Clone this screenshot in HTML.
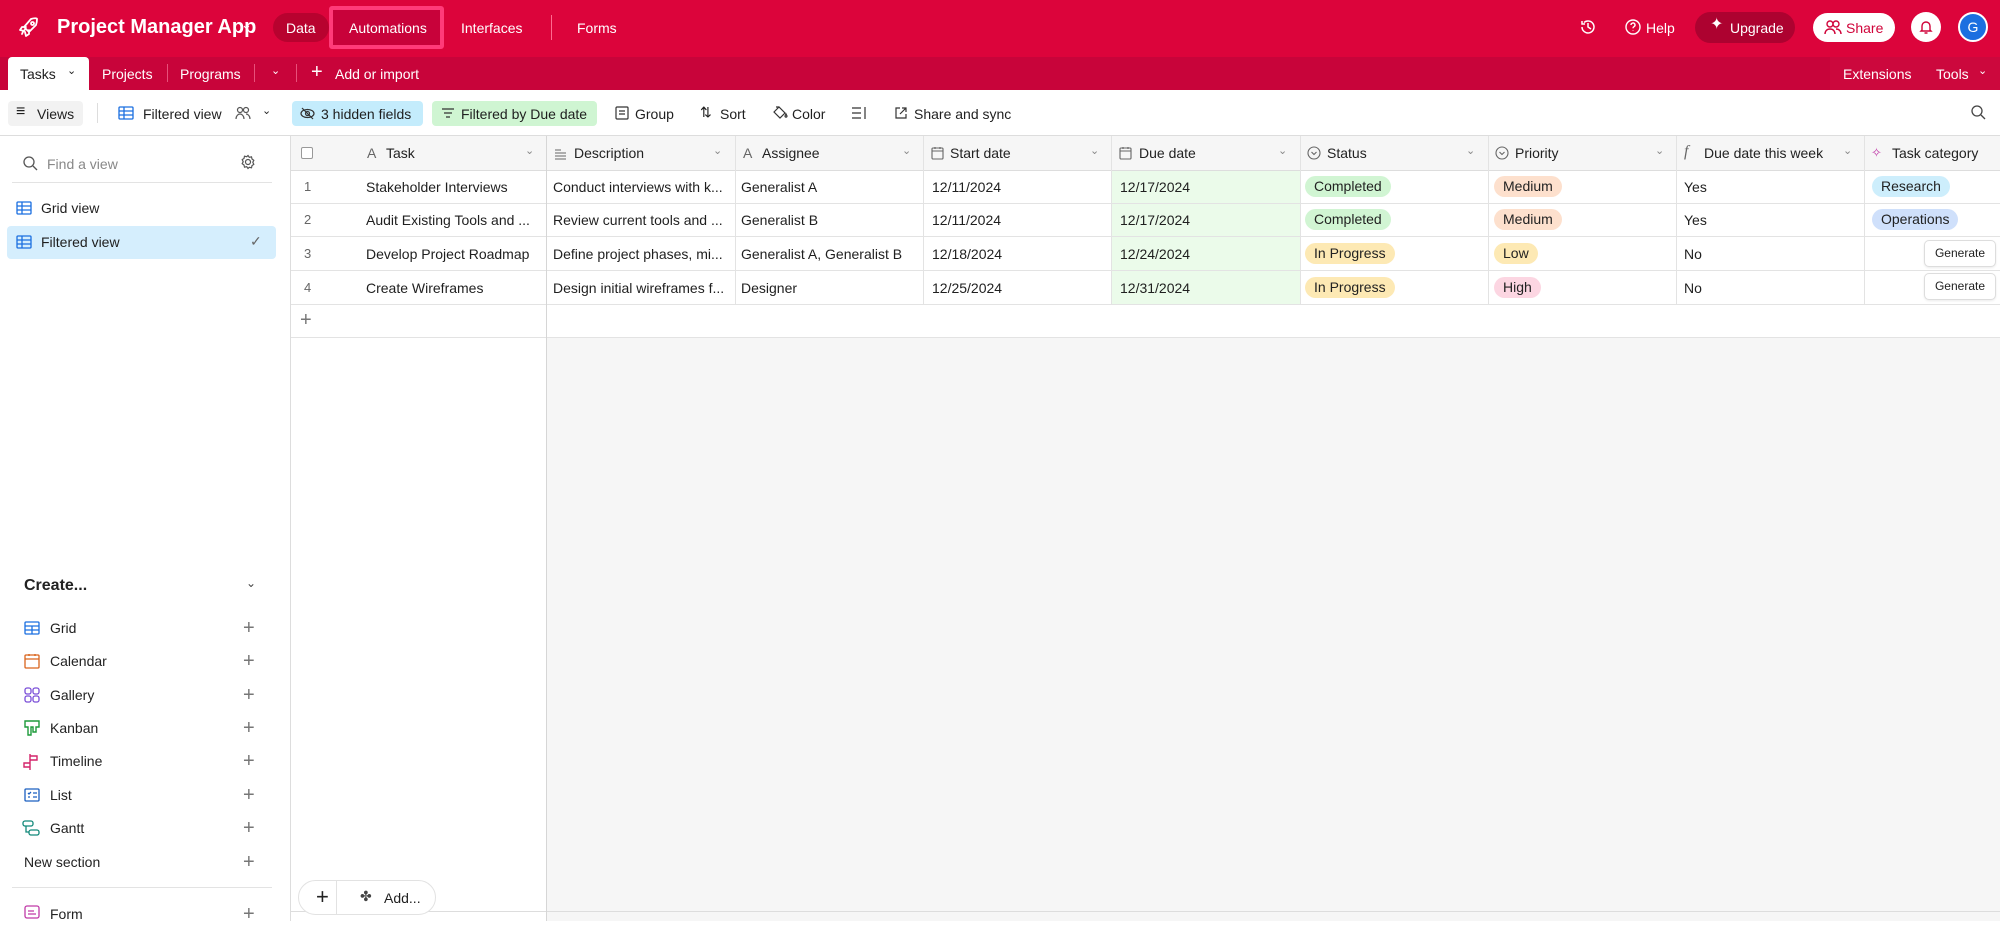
<!DOCTYPE html>
<html><head><meta charset="utf-8"><style>
*{box-sizing:border-box;margin:0;padding:0}
body{width:2000px;height:921px;overflow:hidden;font-family:"Liberation Sans",sans-serif;font-size:14px;color:#1f1f1f;background:#fff;position:relative}
.a{position:absolute;white-space:nowrap}
.w{color:#fff}
.pill{position:absolute;height:21px;line-height:21px;border-radius:11px;padding:0 9px;font-size:14px;color:#222}
.hl{position:absolute;height:1px;background:#e3e3e3}
.vl{position:absolute;width:1px;background:#e3e3e3}
.hd{position:absolute;top:145px;font-size:14px;color:#222}
.cv{position:absolute;font-size:11px;color:#888}
.plus{position:absolute;font-size:20px;color:#777;line-height:20px}
.sp{position:absolute;left:243px;font-size:20px;color:#777;line-height:20px}
.sb{position:absolute;left:50px;font-size:14px;color:#222}
.gen{position:absolute;left:1924px;width:72px;height:27px;border:1px solid #ddd;border-radius:5px;background:#fff;font-size:12px;line-height:25px;text-align:center;box-shadow:0 1px 2px rgba(0,0,0,.08)}
</style></head><body>
<!-- top bar -->
<div class="a" style="left:0;top:0;width:2000px;height:57px;background:#dc043b"></div>
<svg class="a" style="left:17px;top:15px" width="24" height="24" viewBox="0 0 24 24" fill="none" stroke="#fff" stroke-width="1.8" stroke-linecap="round" stroke-linejoin="round"><path d="M5 19c1-3 2-4 4-5M14 4c3-1 6-1 6 0s0 3-1 6l-7 7-5-5 7-8zM9 12l-4 0-2 3 4 1M12 15v4l-3 2-1-4"/><circle cx="15.5" cy="8.5" r="1.5"/></svg>
<div class="a w" style="left:57px;top:16px;font-size:20px;font-weight:bold">Project Manager App</div>
<div class="a w" style="left:241px;top:17px;font-size:13px">&#8964;</div>
<div class="a" style="left:273px;top:13px;width:56px;height:29px;border-radius:15px;background:#b8022f"></div>
<div class="a w" style="left:286px;top:20px">Data</div>
<div class="a" style="left:329px;top:6px;width:115px;height:43px;border:4px solid #ff3b79;border-radius:3px;background:#c8023a"></div>
<div class="a w" style="left:349px;top:20px">Automations</div>
<div class="a w" style="left:461px;top:20px">Interfaces</div>
<div class="a" style="left:551px;top:15px;width:1px;height:25px;background:#ff6a8f"></div>
<div class="a w" style="left:577px;top:20px">Forms</div>
<svg class="a" style="left:1579px;top:18px" width="18" height="18" viewBox="0 0 18 18" fill="none" stroke="#fff" stroke-width="1.5"><path d="M3 9a6 6 0 1 0 2-4.5M3 3v3h3M9 5v4l3 2"/></svg>
<svg class="a" style="left:1624px;top:18px" width="18" height="18" viewBox="0 0 18 18" fill="none" stroke="#fff" stroke-width="1.4"><circle cx="9" cy="9" r="7"/><path d="M7 7a2 2 0 1 1 3 1.7c-.7.4-1 .8-1 1.6M9 12.5v.5"/></svg>
<div class="a w" style="left:1646px;top:20px">Help</div>
<div class="a" style="left:1695px;top:12px;width:100px;height:31px;border-radius:16px;background:#ad0230"></div>
<div class="a w" style="left:1710px;top:14px;font-size:16px">&#10022;</div>
<div class="a w" style="left:1730px;top:20px">Upgrade</div>
<div class="a" style="left:1813px;top:13px;width:82px;height:29px;border-radius:15px;background:#fff"></div>
<svg class="a" style="left:1824px;top:19px" width="18" height="16" viewBox="0 0 18 16" fill="none" stroke="#d0043a" stroke-width="1.4"><circle cx="6" cy="5" r="3"/><circle cx="12" cy="5" r="3"/><path d="M1 15c0-3 2-5 5-5s5 2 5 5M12 10c3 0 5 2 5 5"/></svg>
<div class="a" style="left:1846px;top:20px;color:#d0043a">Share</div>
<div class="a" style="left:1911px;top:12px;width:30px;height:30px;border-radius:50%;background:#fff"></div>
<svg class="a" style="left:1918px;top:19px" width="16" height="16" viewBox="0 0 16 16" fill="none" stroke="#d0043a" stroke-width="1.4"><path d="M4 11V7a4 4 0 0 1 8 0v4l1 1H3zM6.5 14h3"/></svg>
<div class="a" style="left:1958px;top:12px;width:30px;height:30px;border-radius:50%;background:#1b6fe0;border:2px solid #fff;color:#fff;font-size:14px;text-align:center;line-height:26px">G</div>
<!-- second bar -->
<div class="a" style="left:0;top:57px;width:2000px;height:33px;background:#c8043a"></div>
<div class="a" style="left:1830px;top:57px;width:170px;height:33px;background:#cc083d"></div>
<div class="a" style="left:8px;top:57px;width:81px;height:33px;background:#fff;border-radius:4px 4px 0 0"></div>
<div class="a" style="left:20px;top:66px">Tasks</div><div class="a" style="left:67px;top:64px;font-size:11px">&#8964;</div>
<div class="a w" style="left:102px;top:66px">Projects</div>
<div class="a" style="left:167px;top:64px;width:1px;height:18px;background:#e8507a"></div>
<div class="a w" style="left:180px;top:66px">Programs</div>
<div class="a" style="left:254px;top:64px;width:1px;height:18px;background:#e8507a"></div>
<div class="a w" style="left:271px;top:64px;font-size:11px">&#8964;</div>
<div class="a" style="left:296px;top:64px;width:1px;height:18px;background:#e8507a"></div>
<div class="a w" style="left:311px;top:61px;font-size:20px;font-weight:300">+</div>
<div class="a w" style="left:335px;top:66px">Add or import</div>
<div class="a w" style="left:1843px;top:66px">Extensions</div>
<div class="a w" style="left:1936px;top:66px">Tools</div><div class="a w" style="left:1978px;top:64px;font-size:11px">&#8964;</div>
<!-- toolbar -->
<div class="a" style="left:8px;top:101px;width:75px;height:25px;border-radius:4px;background:#f2f2f2"></div>
<div class="a" style="left:16px;top:103px;font-size:16px">&#8801;</div>
<div class="a" style="left:37px;top:106px">Views</div>
<div class="a" style="left:97px;top:103px;width:1px;height:20px;background:#ddd"></div>
<svg class="a" style="left:118px;top:106px" width="16" height="14" viewBox="0 0 16 14" fill="none" stroke="#1b6fe0" stroke-width="1.3"><rect x="1" y="1" width="14" height="12" rx="1"/><path d="M1 5h14M1 9h14M6 1v12"/></svg>
<div class="a" style="left:143px;top:106px">Filtered view</div>
<svg class="a" style="left:234px;top:105px" width="18" height="16" viewBox="0 0 18 16" fill="none" stroke="#555" stroke-width="1.2"><circle cx="6" cy="5" r="2.5"/><circle cx="12" cy="5" r="2.5"/><path d="M2 14c0-3 2-5 4-5s4 2 4 5M12 9c2 0 4 2 4 5"/></svg>
<div class="a" style="left:262px;top:104px;font-size:11px">&#8964;</div>
<div class="a" style="left:292px;top:101px;width:131px;height:25px;border-radius:4px;background:#c4ecfc"></div>
<svg class="a" style="left:300px;top:106px" width="15" height="15" viewBox="0 0 15 15" fill="none" stroke="#333" stroke-width="1.2"><ellipse cx="7.5" cy="7.5" rx="6.5" ry="4"/><circle cx="7.5" cy="7.5" r="2"/><path d="M2 2l11 11"/></svg>
<div class="a" style="left:321px;top:106px">3 hidden fields</div>
<div class="a" style="left:432px;top:101px;width:165px;height:25px;border-radius:4px;background:#cff5d2"></div>
<svg class="a" style="left:441px;top:107px" width="14" height="12" viewBox="0 0 14 12" fill="none" stroke="#333" stroke-width="1.3"><path d="M1 2h12M3 6h8M5 10h4"/></svg>
<div class="a" style="left:461px;top:106px">Filtered by Due date</div>
<svg class="a" style="left:615px;top:106px" width="14" height="14" viewBox="0 0 14 14" fill="none" stroke="#333" stroke-width="1.2"><rect x="1" y="1" width="12" height="12" rx="1"/><path d="M4 5h6M4 8h6"/></svg>
<div class="a" style="left:635px;top:106px">Group</div>
<div class="a" style="left:700px;top:104px;font-size:14px">&#8645;</div>
<div class="a" style="left:720px;top:106px">Sort</div>
<svg class="a" style="left:771px;top:104px" width="17" height="17" viewBox="0 0 17 17" fill="none" stroke="#333" stroke-width="1.2"><path d="M3 8l5-5 6 6-5 5zM5 3l3 0M14 12c0 1.5 2 1.5 2 0l-1-2z"/></svg>
<div class="a" style="left:792px;top:106px">Color</div>
<svg class="a" style="left:851px;top:106px" width="16" height="14" viewBox="0 0 16 14" fill="none" stroke="#333" stroke-width="1.2"><path d="M1 2h9M1 7h9M1 12h9M14 1v12"/></svg>
<svg class="a" style="left:894px;top:106px" width="14" height="14" viewBox="0 0 14 14" fill="none" stroke="#333" stroke-width="1.2"><path d="M6 2H2v10h10V8M8 2h4v4M12 2L6 8"/></svg>
<div class="a" style="left:914px;top:106px">Share and sync</div>
<svg class="a" style="left:1970px;top:104px" width="17" height="17" viewBox="0 0 17 17" fill="none" stroke="#444" stroke-width="1.3"><circle cx="7" cy="7" r="5"/><path d="M11 11l4 4"/></svg>
<div class="hl" style="left:0;top:135px;width:2000px;background:#ddd"></div>
<!-- sidebar -->
<div class="vl" style="left:290px;top:136px;height:785px;background:#ddd"></div>
<svg class="a" style="left:22px;top:155px" width="16" height="16" viewBox="0 0 16 16" fill="none" stroke="#555" stroke-width="1.3"><circle cx="7" cy="7" r="5"/><path d="M11 11l4 4"/></svg>
<div class="a" style="left:47px;top:156px;color:#888">Find a view</div>
<svg class="a" style="left:240px;top:154px" width="16" height="16" viewBox="0 0 16 16" fill="none" stroke="#555" stroke-width="1.2"><circle cx="8" cy="8" r="2.5"/><path d="M8 1.5l1.3 1.8 2.2-.5.5 2.2 1.8 1.3-1 2 1 2-1.8 1.3-.5 2.2-2.2-.5L8 14.5l-1.3-1.8-2.2.5-.5-2.2-1.8-1.3 1-2-1-2 1.8-1.3.5-2.2 2.2.5z"/></svg>
<div class="hl" style="left:12px;top:182px;width:260px"></div>
<svg class="a" style="left:16px;top:201px" width="16" height="14" viewBox="0 0 16 14" fill="none" stroke="#1b6fe0" stroke-width="1.3"><rect x="1" y="1" width="14" height="12" rx="1"/><path d="M1 5h14M1 9h14M6 1v12"/></svg>
<div class="a" style="left:41px;top:200px">Grid view</div>
<div class="a" style="left:7px;top:226px;width:269px;height:33px;border-radius:4px;background:#d5eefd"></div>
<svg class="a" style="left:16px;top:235px" width="16" height="14" viewBox="0 0 16 14" fill="none" stroke="#1b6fe0" stroke-width="1.3"><rect x="1" y="1" width="14" height="12" rx="1"/><path d="M1 5h14M1 9h14M6 1v12"/></svg>
<div class="a" style="left:41px;top:234px">Filtered view</div>
<div class="a" style="left:250px;top:233px;color:#666;font-size:14px">&#10003;</div>
<div class="a" style="left:24px;top:577px;font-size:16px;font-weight:bold;color:#222">Create...</div>
<div class="a" style="left:246px;top:576px;font-size:12px;color:#444">&#8964;</div>
<svg class="a" style="left:24px;top:621px" width="16" height="14" viewBox="0 0 16 14" fill="none" stroke="#1b6fe0" stroke-width="1.3"><rect x="1" y="1" width="14" height="12" rx="1"/><path d="M1 5h14M1 9h14M8 5v8"/></svg>
<svg class="a" style="left:24px;top:653px" width="16" height="16" viewBox="0 0 16 16" fill="none" stroke="#d9631c" stroke-width="1.3"><rect x="1" y="2" width="14" height="13" rx="1"/><path d="M1 6h14M5 1v2M11 1v2"/></svg>
<svg class="a" style="left:24px;top:687px" width="16" height="16" viewBox="0 0 16 16" fill="none" stroke="#7b4fd8" stroke-width="1.3"><rect x="1" y="1" width="6" height="6" rx="2"/><rect x="9" y="1" width="6" height="6" rx="2"/><rect x="1" y="9" width="6" height="6" rx="2"/><rect x="9" y="9" width="6" height="6" rx="2"/></svg>
<svg class="a" style="left:24px;top:720px" width="16" height="16" viewBox="0 0 16 16" fill="none" stroke="#1d9a3a" stroke-width="1.4"><path d="M1 1h14v6h-3v5H9V7H7v8H4V7H1z"/></svg>
<svg class="a" style="left:22px;top:753px" width="18" height="18" viewBox="0 0 18 18" fill="none" stroke="#d4246a" stroke-width="1.4"><path d="M8 1v16M8 3h7v4H8M8 10H2v4h6"/></svg>
<svg class="a" style="left:24px;top:788px" width="16" height="14" viewBox="0 0 16 14" fill="none" stroke="#1b5fc0" stroke-width="1.3"><rect x="1" y="1" width="14" height="12" rx="1"/><path d="M4 5l1 1 2-2M9 5h4M4 9h2M9 9h4"/></svg>
<svg class="a" style="left:22px;top:820px" width="18" height="16" viewBox="0 0 18 16" fill="none" stroke="#12897a" stroke-width="1.3"><rect x="1" y="1" width="10" height="5" rx="2"/><rect x="7" y="10" width="10" height="5" rx="2"/><path d="M4 6v6h3"/></svg>
<svg class="a" style="left:24px;top:905px" width="16" height="14" viewBox="0 0 16 14" fill="none" stroke="#c03aa8" stroke-width="1.3"><rect x="1" y="1" width="14" height="12" rx="2"/><path d="M4 6h6M4 9h8"/></svg>
<div class="sb" style="top:620px">Grid</div>
<div class="sb" style="top:653px">Calendar</div>
<div class="sb" style="top:687px">Gallery</div>
<div class="sb" style="top:720px">Kanban</div>
<div class="sb" style="top:753px">Timeline</div>
<div class="sb" style="top:787px">List</div>
<div class="sb" style="top:820px">Gantt</div>
<div class="sb" style="left:24px;top:854px">New section</div>
<div class="sb" style="top:906px">Form</div>
<div class="sp" style="top:618px">+</div>
<div class="sp" style="top:651px">+</div>
<div class="sp" style="top:685px">+</div>
<div class="sp" style="top:718px">+</div>
<div class="sp" style="top:751px">+</div>
<div class="sp" style="top:785px">+</div>
<div class="sp" style="top:818px">+</div>
<div class="sp" style="top:852px">+</div>
<div class="sp" style="top:904px">+</div>
<div class="hl" style="left:12px;top:887px;width:260px"></div>
<!-- grid -->
<div class="a" style="left:547px;top:337px;width:1453px;height:584px;background:#f6f6f6"></div>
<div class="a" style="left:291px;top:136px;width:1709px;height:34px;background:#f6f6f6"></div>
<div class="a" style="left:1111px;top:170px;width:189px;height:134px;background:#ebfbea"></div>
<div class="hl" style="left:291px;top:170px;width:1709px;background:#ddd"></div>
<div class="hl" style="left:291px;top:203px;width:1709px"></div>
<div class="hl" style="left:291px;top:236px;width:1709px"></div>
<div class="hl" style="left:291px;top:270px;width:1709px"></div>
<div class="hl" style="left:291px;top:304px;width:1709px"></div>
<div class="hl" style="left:291px;top:337px;width:1709px"></div>
<div class="hl" style="left:291px;top:911px;width:1709px;background:#ddd"></div>
<div class="vl" style="left:546px;top:136px;height:785px;background:#d6d6d6"></div>
<div class="vl" style="left:735px;top:136px;height:168px"></div>
<div class="vl" style="left:923px;top:136px;height:168px"></div>
<div class="vl" style="left:1111px;top:136px;height:168px"></div>
<div class="vl" style="left:1300px;top:136px;height:168px"></div>
<div class="vl" style="left:1488px;top:136px;height:168px"></div>
<div class="vl" style="left:1676px;top:136px;height:168px"></div>
<div class="vl" style="left:1864px;top:136px;height:168px"></div>
<div class="a" style="left:301px;top:147px;width:12px;height:12px;border:1px solid #999;border-radius:2px;background:#fff"></div>
<div class="hd" style="left:367px;color:#666">A</div><div class="hd" style="left:386px">Task</div><div class="cv" style="left:525px;top:144px">&#8964;</div>
<svg class="a" style="left:554px;top:148px" width="13" height="12" viewBox="0 0 13 12" fill="none" stroke="#666" stroke-width="1.1"><path d="M1 2h6M1 5h11M1 8h11M1 11h11"/></svg><div class="hd" style="left:574px">Description</div><div class="cv" style="left:713px;top:144px">&#8964;</div>
<div class="hd" style="left:743px;color:#666">A</div><div class="hd" style="left:762px">Assignee</div><div class="cv" style="left:902px;top:144px">&#8964;</div>
<svg class="a" style="left:931px;top:146px" width="13" height="14" viewBox="0 0 13 14" fill="none" stroke="#666" stroke-width="1.1"><rect x="1" y="2" width="11" height="11" rx="1"/><path d="M1 5h11M4 1v2M9 1v2"/></svg><div class="hd" style="left:950px">Start date</div><div class="cv" style="left:1090px;top:144px">&#8964;</div>
<svg class="a" style="left:1119px;top:146px" width="13" height="14" viewBox="0 0 13 14" fill="none" stroke="#666" stroke-width="1.1"><rect x="1" y="2" width="11" height="11" rx="1"/><path d="M1 5h11M4 1v2M9 1v2"/></svg><div class="hd" style="left:1139px">Due date</div><div class="cv" style="left:1278px;top:144px">&#8964;</div>
<svg class="a" style="left:1307px;top:146px" width="14" height="14" viewBox="0 0 14 14" fill="none" stroke="#666" stroke-width="1.1"><circle cx="7" cy="7" r="6"/><path d="M4.5 6l2.5 2.5L9.5 6"/></svg><div class="hd" style="left:1327px">Status</div><div class="cv" style="left:1466px;top:144px">&#8964;</div>
<svg class="a" style="left:1495px;top:146px" width="14" height="14" viewBox="0 0 14 14" fill="none" stroke="#666" stroke-width="1.1"><circle cx="7" cy="7" r="6"/><path d="M4.5 6l2.5 2.5L9.5 6"/></svg><div class="hd" style="left:1515px">Priority</div><div class="cv" style="left:1655px;top:144px">&#8964;</div>
<div class="hd" style="left:1684px;color:#666;font-style:italic;font-family:'Liberation Serif',serif;font-size:16px;top:143px">f</div><div class="hd" style="left:1704px">Due date this week</div><div class="cv" style="left:1843px;top:144px">&#8964;</div>
<div class="hd" style="left:1871px;color:#c03aa8;font-size:13px">&#10023;</div><div class="hd" style="left:1892px">Task category</div>
<!-- rows -->
<div class="a" style="left:304px;top:179px;color:#666;font-size:13px">1</div>
<div class="a" style="left:366px;top:179px">Stakeholder Interviews</div>
<div class="a" style="left:553px;top:179px">Conduct interviews with k...</div>
<div class="a" style="left:741px;top:179px">Generalist A</div>
<div class="a" style="left:932px;top:179px">12/11/2024</div>
<div class="a" style="left:1120px;top:179px">12/17/2024</div>
<div class="pill" style="left:1305px;top:176px;background:#d1f5d3">Completed</div>
<div class="pill" style="left:1494px;top:176px;background:#fde0cd">Medium</div>
<div class="a" style="left:1684px;top:179px">Yes</div>
<div class="pill" style="left:1872px;top:176px;background:#cdeefc">Research</div>

<div class="a" style="left:304px;top:212px;color:#666;font-size:13px">2</div>
<div class="a" style="left:366px;top:212px">Audit Existing Tools and ...</div>
<div class="a" style="left:553px;top:212px">Review current tools and ...</div>
<div class="a" style="left:741px;top:212px">Generalist B</div>
<div class="a" style="left:932px;top:212px">12/11/2024</div>
<div class="a" style="left:1120px;top:212px">12/17/2024</div>
<div class="pill" style="left:1305px;top:209px;background:#d1f5d3">Completed</div>
<div class="pill" style="left:1494px;top:209px;background:#fde0cd">Medium</div>
<div class="a" style="left:1684px;top:212px">Yes</div>
<div class="pill" style="left:1872px;top:209px;background:#cfe0fb">Operations</div>

<div class="a" style="left:304px;top:246px;color:#666;font-size:13px">3</div>
<div class="a" style="left:366px;top:246px">Develop Project Roadmap</div>
<div class="a" style="left:553px;top:246px">Define project phases, mi...</div>
<div class="a" style="left:741px;top:246px">Generalist A, Generalist B</div>
<div class="a" style="left:932px;top:246px">12/18/2024</div>
<div class="a" style="left:1120px;top:246px">12/24/2024</div>
<div class="pill" style="left:1305px;top:243px;background:#fde9b4">In Progress</div>
<div class="pill" style="left:1494px;top:243px;background:#fde9b4">Low</div>
<div class="a" style="left:1684px;top:246px">No</div>
<div class="gen" style="top:240px">Generate</div>

<div class="a" style="left:304px;top:280px;color:#666;font-size:13px">4</div>
<div class="a" style="left:366px;top:280px">Create Wireframes</div>
<div class="a" style="left:553px;top:280px">Design initial wireframes f...</div>
<div class="a" style="left:741px;top:280px">Designer</div>
<div class="a" style="left:932px;top:280px">12/25/2024</div>
<div class="a" style="left:1120px;top:280px">12/31/2024</div>
<div class="pill" style="left:1305px;top:277px;background:#fde9b4">In Progress</div>
<div class="pill" style="left:1494px;top:277px;background:#fcd6e2">High</div>
<div class="a" style="left:1684px;top:280px">No</div>
<div class="gen" style="top:273px">Generate</div>

<div class="plus" style="left:300px;top:310px">+</div>
<!-- bottom add pill -->
<div class="a" style="left:298px;top:880px;width:138px;height:35px;border:1px solid #e2e2e2;border-radius:18px;background:#fff"></div>
<div class="a" style="left:336px;top:881px;width:1px;height:33px;background:#e2e2e2"></div>
<div class="a" style="left:316px;top:884px;font-size:22px;color:#222">+</div>
<div class="a" style="left:360px;top:888px;font-size:14px;color:#444">&#10020;</div>
<div class="a" style="left:384px;top:890px">Add...</div>
</body></html>
